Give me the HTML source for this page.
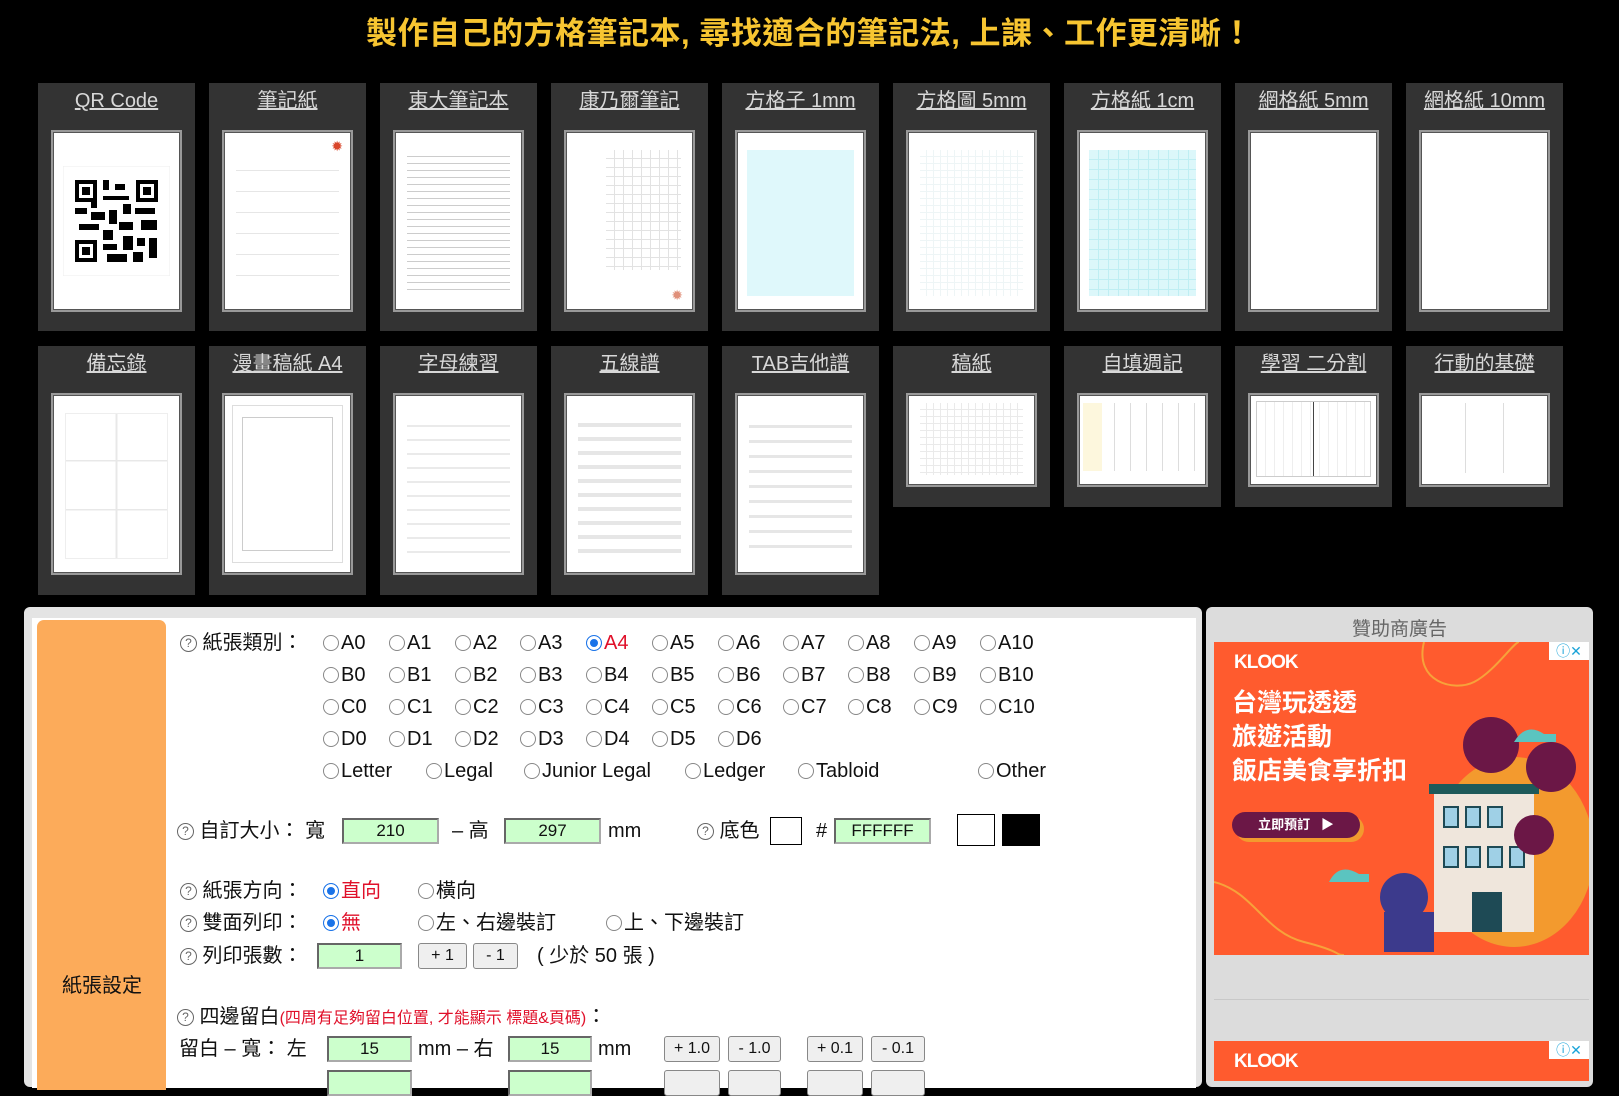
<!DOCTYPE html>
<html><head><meta charset="utf-8">
<style>
*{margin:0;padding:0;box-sizing:border-box}
body{width:1619px;height:1076px;background:#000;overflow:hidden;position:relative;font-family:"Liberation Sans","Noto Sans CJK TC",sans-serif;color:#111}
.a{position:absolute;white-space:nowrap}
h1{position:absolute;left:0;width:1619px;top:8px;text-align:center;color:#f7c531;font-size:31px;font-weight:bold;font-family:"Liberation Sans","Noto Sans CJK TC",sans-serif;letter-spacing:0.5px}
.card{position:absolute;width:157px;background:#333}
.card .t{position:absolute;left:0;width:157px;top:6px;text-align:center;color:#d8d8d8;font-size:20px;line-height:24px;text-decoration:underline}
.th{position:absolute;left:13px;width:131px;background:#fff;border:2px solid #999;box-shadow:inset 0 0 0 1px #555}
.lines{position:absolute;left:12px;right:12px;top:18px;bottom:14px}
.panel{position:absolute;left:24px;top:607px;width:1178px;height:480px;background:#e4e4e4;border-radius:6px}
.inner{position:absolute;left:32px;top:618px;width:1164px;height:470px;background:#fff}
.side{position:absolute;left:37px;top:620px;width:129px;height:470px;background:#fcab5a;border-radius:7px 7px 0 0}
.f{font-size:20px;line-height:24px}
.r{display:inline-block;width:16px;height:16px;border:1px solid #888;border-radius:50%;vertical-align:-2px;margin-right:2px;background:#fff}
.r.on{border:1px solid #1a73e8;box-shadow:inset 0 0 0 3px #fff;background:#1a73e8}
.q{display:inline-block;width:17px;height:17px;border:1.5px solid #666;border-radius:50%;font-size:12px;line-height:14px;text-align:center;color:#666;vertical-align:2px}
.in{position:absolute;height:26px;background:#ccffcc;border:2px solid #666;border-right-color:#aaa;border-bottom-color:#aaa;text-align:center;font-size:17px;line-height:22px}
.bt{position:absolute;height:26px;background:#efefef;border:1px solid #888;border-radius:3px;text-align:center;font-size:16px;line-height:24px}
.red{color:#e0102a}
.ad{position:absolute;left:1206px;top:607px;width:387px;height:480px;background:#dcdcdc;border-radius:6px}
.klook{position:absolute;background:#ff5b2e;overflow:hidden}
</style></head><body>
<h1>製作自己的方格筆記本, 尋找適合的筆記法, 上課、工作更清晰！</h1>

<div class="card" style="left:38px;top:83px;height:248px"><div class="t">QR Code</div>
 <div class="th" style="top:47px;height:182px">
  <svg style="position:absolute;left:10px;top:34px" width="107" height="110" viewBox="0 0 107 110"><rect x="0" y="0" width="107" height="110" fill="#fff" stroke="#eee"/>
  <g fill="#000"><rect x="12" y="14" width="22" height="22"/><rect x="16" y="18" width="14" height="14" fill="#fff"/><rect x="19" y="21" width="8" height="8"/>
  <rect x="73" y="14" width="22" height="22"/><rect x="77" y="18" width="14" height="14" fill="#fff"/><rect x="80" y="21" width="8" height="8"/>
  <rect x="12" y="74" width="22" height="22"/><rect x="16" y="78" width="14" height="14" fill="#fff"/><rect x="19" y="81" width="8" height="8"/>
  <rect x="40" y="14" width="6" height="10"/><rect x="52" y="18" width="10" height="6"/><rect x="40" y="30" width="26" height="4"/><rect x="60" y="38" width="8" height="10"/>
  <rect x="12" y="42" width="12" height="6"/><rect x="28" y="46" width="14" height="8"/><rect x="46" y="44" width="8" height="14"/><rect x="72" y="42" width="20" height="6"/>
  <rect x="16" y="58" width="20" height="6"/><rect x="56" y="56" width="14" height="8"/><rect x="78" y="54" width="16" height="10"/><rect x="40" y="64" width="10" height="10"/>
  <rect x="40" y="78" width="14" height="6"/><rect x="60" y="70" width="10" height="14"/><rect x="74" y="72" width="8" height="8"/><rect x="86" y="72" width="8" height="20"/>
  <rect x="44" y="88" width="20" height="8"/><rect x="70" y="86" width="10" height="10"/><rect x="28" y="36" width="6" height="6"/></g></svg>
 </div></div>
<div class="card" style="left:209px;top:83px;height:248px"><div class="t">筆記紙</div>
 <div class="th" style="top:47px;height:182px"><div class="lines" style="background:repeating-linear-gradient(#fff 0 20px,#e6e6e6 20px 21px)"></div><div class="a" style="right:8px;top:6px;color:#d9462a;font-size:14px">✹</div></div></div>
<div class="card" style="left:380px;top:83px;height:248px"><div class="t">東大筆記本</div>
 <div class="th" style="top:47px;height:182px"><div class="lines" style="background:repeating-linear-gradient(#fff 0 6px,#ccc 6px 7px)"></div></div></div>
<div class="card" style="left:551px;top:83px;height:248px"><div class="t">康乃爾筆記</div>
 <div class="th" style="top:47px;height:182px"><div class="lines" style="left:40px;bottom:40px;background:repeating-linear-gradient(90deg,transparent 0 8px,#e2e2e2 8px 9px),repeating-linear-gradient(#fff 0 8px,#e2e2e2 8px 9px)"></div><div class="a" style="right:10px;bottom:6px;color:#e0907a;font-size:14px">✹</div></div></div>
<div class="card" style="left:722px;top:83px;height:248px"><div class="t">方格子 1mm</div>
 <div class="th" style="top:47px;height:182px"><div class="lines" style="left:10px;right:10px;background:#dff8fb"></div></div></div>
<div class="card" style="left:893px;top:83px;height:248px"><div class="t">方格圖 5mm</div>
 <div class="th" style="top:47px;height:182px"><div class="lines" style="background:repeating-linear-gradient(90deg,transparent 0 6px,#eef5f6 6px 7px),repeating-linear-gradient(#fff 0 6px,#eef5f6 6px 7px)"></div></div></div>
<div class="card" style="left:1064px;top:83px;height:248px"><div class="t">方格紙 1cm</div>
 <div class="th" style="top:47px;height:182px"><div class="lines" style="left:10px;right:10px;background:repeating-linear-gradient(90deg,transparent 0 9px,#bfeef3 9px 10px),repeating-linear-gradient(#dcf7fa 0 9px,#bfeef3 9px 10px)"></div></div></div>
<div class="card" style="left:1235px;top:83px;height:248px"><div class="t">網格紙 5mm</div>
 <div class="th" style="top:47px;height:182px"></div></div>
<div class="card" style="left:1406px;top:83px;height:248px"><div class="t">網格紙 10mm</div>
 <div class="th" style="top:47px;height:182px"></div></div>

<div class="card" style="left:38px;top:346px;height:249px"><div class="t">備忘錄</div>
 <div class="th" style="top:47px;height:182px"><div class="lines" style="border:1px solid #eee;background:linear-gradient(90deg,transparent 49%,#e8e8e8 49% 51%,transparent 51%),linear-gradient(transparent 32%,#e8e8e8 32% 33%,transparent 33% 66%,#e8e8e8 66% 67%,transparent 67%)"></div></div></div>
<div class="card" style="left:209px;top:346px;height:249px"><div class="t">漫畫稿紙 A4</div>
 <div class="th" style="top:47px;height:182px"><div class="lines" style="left:8px;right:8px;top:10px;bottom:10px;border:1px solid #ddd"></div><div class="lines" style="left:18px;right:18px;top:22px;bottom:22px;border:1px solid #ccc"></div></div></div>
<div class="card" style="left:380px;top:346px;height:249px"><div class="t">字母練習</div>
 <div class="th" style="top:47px;height:182px"><div class="lines" style="background:repeating-linear-gradient(#fff 0 12px,#eaeaea 12px 14px)"></div></div></div>
<div class="card" style="left:551px;top:346px;height:249px"><div class="t">五線譜</div>
 <div class="th" style="top:47px;height:182px"><div class="lines" style="background:repeating-linear-gradient(#fff 0 10px,#e6e6e6 10px 14px)"></div></div></div>
<div class="card" style="left:722px;top:346px;height:249px"><div class="t">TAB吉他譜</div>
 <div class="th" style="top:47px;height:182px"><div class="lines" style="background:repeating-linear-gradient(#fff 0 12px,#e6e6e6 12px 15px)"></div></div></div>
<div class="card" style="left:893px;top:346px;height:161px"><div class="t">稿紙</div>
 <div class="th" style="top:47px;height:94px"><div class="lines" style="top:8px;bottom:10px;background:repeating-linear-gradient(90deg,transparent 0 6px,#eaeaea 6px 7px),repeating-linear-gradient(#fff 0 6px,#eaeaea 6px 7px)"></div></div></div>
<div class="card" style="left:1064px;top:346px;height:161px"><div class="t">自填週記</div>
 <div class="th" style="top:47px;height:94px"><div class="lines" style="top:8px;bottom:14px;left:4px;right:4px;background:linear-gradient(90deg,#fdf7dd 0 16%,transparent 16%),repeating-linear-gradient(90deg,transparent 0 15px,#ddd 15px 16px)"></div></div></div>
<div class="card" style="left:1235px;top:346px;height:161px"><div class="t">學習 二分割</div>
 <div class="th" style="top:47px;height:94px"><div class="lines" style="top:6px;bottom:8px;left:6px;right:6px;border:1px solid #ccc;background:linear-gradient(90deg,transparent 49.5%,#444 49.5% 50.5%,transparent 50.5%),repeating-linear-gradient(90deg,transparent 0 8px,#eee 8px 9px)"></div></div></div>
<div class="card" style="left:1406px;top:346px;height:161px"><div class="t">行動的基礎</div>
 <div class="th" style="top:47px;height:94px"><div class="lines" style="top:8px;bottom:12px;left:6px;right:6px;background:linear-gradient(90deg,transparent 33%,#ddd 33% 34%,transparent 34% 66%,#ddd 66% 67%,transparent 67%)"></div></div></div>

<div class="panel"></div>
<div class="inner"></div>
<div class="side"></div>
<div class="a f" style="left:62px;top:974px;font-size:20px">紙張設定</div>

<div class="a f" style="left:180px;top:631px"><span class="q">?</span> 紙張類別：</div>
<div class="a f" style="left:323px;top:631px"><span class="r"></span>A0</div><div class="a f" style="left:389px;top:631px"><span class="r"></span>A1</div><div class="a f" style="left:455px;top:631px"><span class="r"></span>A2</div><div class="a f" style="left:520px;top:631px"><span class="r"></span>A3</div><div class="a f red" style="left:586px;top:631px"><span class="r on"></span>A4</div><div class="a f" style="left:652px;top:631px"><span class="r"></span>A5</div><div class="a f" style="left:718px;top:631px"><span class="r"></span>A6</div><div class="a f" style="left:783px;top:631px"><span class="r"></span>A7</div><div class="a f" style="left:848px;top:631px"><span class="r"></span>A8</div><div class="a f" style="left:914px;top:631px"><span class="r"></span>A9</div><div class="a f" style="left:980px;top:631px"><span class="r"></span>A10</div>
<div class="a f" style="left:323px;top:663px"><span class="r"></span>B0</div><div class="a f" style="left:389px;top:663px"><span class="r"></span>B1</div><div class="a f" style="left:455px;top:663px"><span class="r"></span>B2</div><div class="a f" style="left:520px;top:663px"><span class="r"></span>B3</div><div class="a f" style="left:586px;top:663px"><span class="r"></span>B4</div><div class="a f" style="left:652px;top:663px"><span class="r"></span>B5</div><div class="a f" style="left:718px;top:663px"><span class="r"></span>B6</div><div class="a f" style="left:783px;top:663px"><span class="r"></span>B7</div><div class="a f" style="left:848px;top:663px"><span class="r"></span>B8</div><div class="a f" style="left:914px;top:663px"><span class="r"></span>B9</div><div class="a f" style="left:980px;top:663px"><span class="r"></span>B10</div>
<div class="a f" style="left:323px;top:695px"><span class="r"></span>C0</div><div class="a f" style="left:389px;top:695px"><span class="r"></span>C1</div><div class="a f" style="left:455px;top:695px"><span class="r"></span>C2</div><div class="a f" style="left:520px;top:695px"><span class="r"></span>C3</div><div class="a f" style="left:586px;top:695px"><span class="r"></span>C4</div><div class="a f" style="left:652px;top:695px"><span class="r"></span>C5</div><div class="a f" style="left:718px;top:695px"><span class="r"></span>C6</div><div class="a f" style="left:783px;top:695px"><span class="r"></span>C7</div><div class="a f" style="left:848px;top:695px"><span class="r"></span>C8</div><div class="a f" style="left:914px;top:695px"><span class="r"></span>C9</div><div class="a f" style="left:980px;top:695px"><span class="r"></span>C10</div>
<div class="a f" style="left:323px;top:727px"><span class="r"></span>D0</div><div class="a f" style="left:389px;top:727px"><span class="r"></span>D1</div><div class="a f" style="left:455px;top:727px"><span class="r"></span>D2</div><div class="a f" style="left:520px;top:727px"><span class="r"></span>D3</div><div class="a f" style="left:586px;top:727px"><span class="r"></span>D4</div><div class="a f" style="left:652px;top:727px"><span class="r"></span>D5</div><div class="a f" style="left:718px;top:727px"><span class="r"></span>D6</div>
<div class="a f" style="left:323px;top:759px"><span class="r"></span>Letter</div><div class="a f" style="left:426px;top:759px"><span class="r"></span>Legal</div><div class="a f" style="left:524px;top:759px"><span class="r"></span>Junior Legal</div><div class="a f" style="left:685px;top:759px"><span class="r"></span>Ledger</div><div class="a f" style="left:798px;top:759px"><span class="r"></span>Tabloid</div><div class="a f" style="left:978px;top:759px"><span class="r"></span>Other</div>

<div class="a f" style="left:177px;top:819px"><span class="q">?</span> 自訂大小： 寬</div>
<div class="in" style="left:342px;top:818px;width:97px">210</div>
<div class="a f" style="left:452px;top:819px">–  高</div>
<div class="in" style="left:504px;top:818px;width:97px">297</div>
<div class="a f" style="left:608px;top:819px">mm</div>
<div class="a f" style="left:697px;top:819px"><span class="q">?</span> 底色</div>
<div class="a" style="left:770px;top:817px;width:32px;height:28px;border:1px solid #000;background:#fff"></div>
<div class="a f" style="left:816px;top:819px">#</div>
<div class="in" style="left:834px;top:818px;width:97px">FFFFFF</div>
<div class="a" style="left:957px;top:814px;width:38px;height:32px;border:1px solid #000;background:#fff"></div>
<div class="a" style="left:1002px;top:814px;width:38px;height:32px;background:#000"></div>

<div class="a f" style="left:180px;top:879px"><span class="q">?</span> 紙張方向：</div>
<div class="a f red" style="left:323px;top:879px"><span class="r on"></span>直向</div>
<div class="a f" style="left:418px;top:879px"><span class="r"></span>橫向</div>
<div class="a f" style="left:180px;top:911px"><span class="q">?</span> 雙面列印：</div>
<div class="a f red" style="left:323px;top:911px"><span class="r on"></span>無</div>
<div class="a f" style="left:418px;top:911px"><span class="r"></span>左、右邊裝訂</div>
<div class="a f" style="left:606px;top:911px"><span class="r"></span>上、下邊裝訂</div>
<div class="a f" style="left:180px;top:944px"><span class="q">?</span> 列印張數：</div>
<div class="in" style="left:317px;top:943px;width:85px">1</div>
<div class="bt" style="left:418px;top:943px;width:49px">+ 1</div>
<div class="bt" style="left:473px;top:943px;width:45px">- 1</div>
<div class="a f" style="left:537px;top:944px">( 少於 50 張 )</div>

<div class="a f" style="left:177px;top:1005px"><span class="q">?</span> 四邊留白<span class="red" style="font-size:16px">(四周有足夠留白位置, 才能顯示 標題&amp;頁碼)</span>：</div>
<div class="a f" style="left:179px;top:1037px">留白 – 寬：  左</div>
<div class="in" style="left:327px;top:1036px;width:85px">15</div>
<div class="a f" style="left:418px;top:1037px">mm – 右</div>
<div class="in" style="left:508px;top:1036px;width:84px">15</div>
<div class="a f" style="left:598px;top:1037px">mm</div>
<div class="bt" style="left:664px;top:1036px;width:56px">+ 1.0</div>
<div class="bt" style="left:728px;top:1036px;width:53px">- 1.0</div>
<div class="bt" style="left:807px;top:1036px;width:56px">+ 0.1</div>
<div class="bt" style="left:871px;top:1036px;width:54px">- 0.1</div>
<div class="in" style="left:327px;top:1070px;width:85px"></div>
<div class="in" style="left:508px;top:1070px;width:84px"></div>
<div class="bt" style="left:664px;top:1070px;width:56px"></div><div class="bt" style="left:728px;top:1070px;width:53px"></div><div class="bt" style="left:807px;top:1070px;width:56px"></div><div class="bt" style="left:871px;top:1070px;width:54px"></div>

<div class="ad"></div>
<div class="a" style="left:1206px;width:387px;top:614px;text-align:center;color:#666;font-size:19px">贊助商廣告</div>
<div class="klook" style="left:1214px;top:642px;width:375px;height:313px">
 <svg class="a" style="left:0;top:0" width="375" height="313"><path d="M210 0 C200 40 240 50 260 40 S300 0 305 0" fill="none" stroke="#f7a23a" stroke-width="2"/><path d="M0 240 C40 250 50 290 90 300 S120 313 130 313" fill="none" stroke="#f7a23a" stroke-width="2"/>
 <ellipse cx="300" cy="210" rx="80" ry="95" fill="#f39a2e"/>
 <rect x="220" y="150" width="100" height="140" fill="#efe6dc"/><rect x="215" y="142" width="110" height="10" fill="#1e5a5a"/>
 <g fill="#9fd0e6" stroke="#1e4a55" stroke-width="2"><rect x="230" y="165" width="14" height="20"/><rect x="252" y="165" width="14" height="20"/><rect x="274" y="165" width="14" height="20"/><rect x="230" y="205" width="14" height="20"/><rect x="252" y="205" width="14" height="20"/><rect x="274" y="205" width="14" height="20"/><rect x="296" y="205" width="14" height="20"/></g>
 <rect x="258" y="250" width="30" height="40" fill="#1e4a55"/>
 <circle cx="277" cy="103" r="28" fill="#6b1746"/><circle cx="337" cy="125" r="25" fill="#6b1746"/><circle cx="320" cy="193" r="20" fill="#6b1746"/>
 <circle cx="190" cy="255" r="24" fill="#3c3a8c"/><rect x="170" y="270" width="50" height="40" fill="#3c3a8c"/>
 <path d="M115 240 q10 -20 30 -8 h10 v8 h-40z" fill="#5bc4c0"/><path d="M300 100 q12 -20 30 -8 h12 v8 h-42z" fill="#5bc4c0"/></svg>
 <div class="a" style="left:20px;top:10px;color:#fff;font-size:19px;font-weight:bold;letter-spacing:-1px">KLOOK</div>
 <div class="a" style="left:18px;top:44px;color:#fff;font-size:25px;line-height:34px;font-weight:bold">台灣玩透透<br>旅遊活動<br>飯店美食享折扣</div>
 <div class="a" style="left:18px;top:170px;width:128px;height:26px;border-radius:13px;background:#6b1746;color:#fff;font-size:13px;line-height:26px;text-align:center;font-weight:bold;box-shadow:4px 4px 0 #f39a2e">立即預訂 &nbsp; ▶</div>
 <div class="a" style="right:0;top:0;width:40px;height:18px;background:#fff;color:#1aa3d8;font-size:14px;line-height:18px;text-align:center">ⓘ✕</div>
</div>
<div class="a" style="left:1214px;top:999px;width:375px;height:1px;background:#c8c8c8"></div>
<div class="klook" style="left:1214px;top:1041px;width:375px;height:40px">
 <div class="a" style="left:20px;top:10px;color:#fff;font-size:19px;font-weight:bold;letter-spacing:-1px">KLOOK</div>
 <div class="a" style="right:0;top:0;width:40px;height:18px;background:#fff;color:#1aa3d8;font-size:14px;line-height:18px;text-align:center">ⓘ✕</div>
</div>
</body></html>
